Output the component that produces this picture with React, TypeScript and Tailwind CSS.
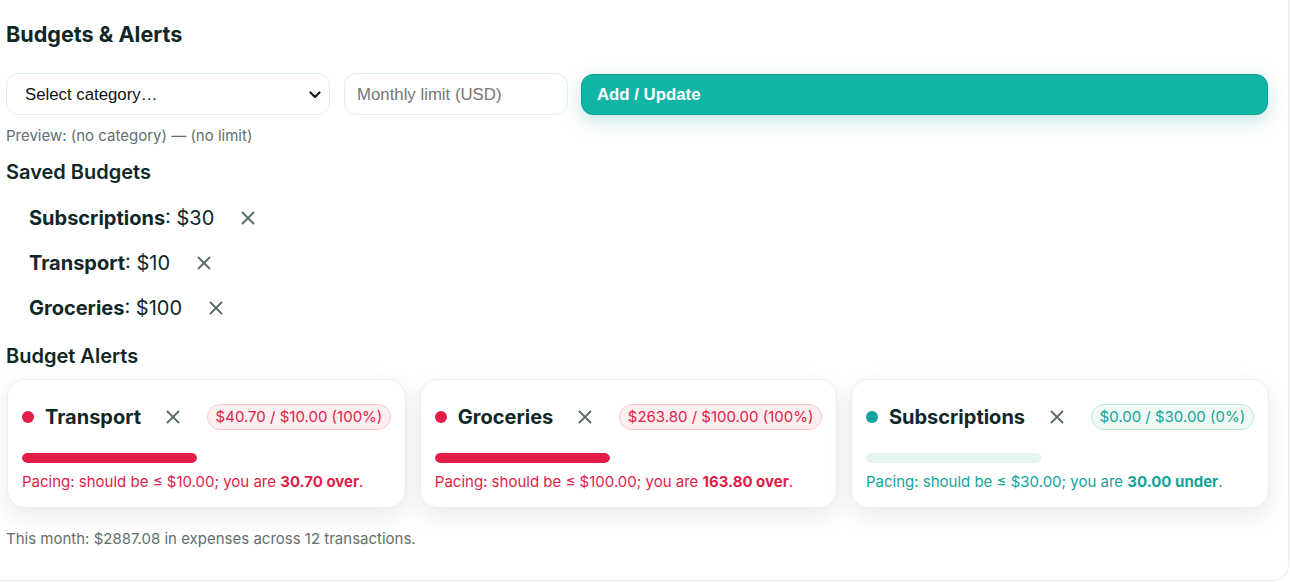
import React from "react";

type Alert = {
  name: string;
  spent: string;
  limit: string;
  pct: string;
  should: string;
  diff: string;
  over: boolean;
};

const alerts: Alert[] = [
  { name: "Transport", spent: "$40.70", limit: "$10.00", pct: "100%", should: "$10.00", diff: "30.70 over", over: true },
  { name: "Groceries", spent: "$263.80", limit: "$100.00", pct: "100%", should: "$100.00", diff: "163.80 over", over: true },
  { name: "Subscriptions", spent: "$0.00", limit: "$30.00", pct: "0%", should: "$30.00", diff: "30.00 under", over: false },
];

const saved = [
  { name: "Subscriptions", amount: "$30" },
  { name: "Transport", amount: "$10" },
  { name: "Groceries", amount: "$100" },
];

function XIcon() {
  return (
    <svg width="14" height="14" viewBox="0 0 14 14" fill="none" stroke="#5b6b6b" strokeWidth="1.8" strokeLinecap="round">
      <line x1="1.5" y1="1.5" x2="12.5" y2="12.5" />
      <line x1="12.5" y1="1.5" x2="1.5" y2="12.5" />
    </svg>
  );
}

function AlertCard({ a }: { a: Alert }) {
  const tone = a.over ? "text-[#e11d48]" : "text-[#14a39a]";
  return (
    <div className="rounded-[18px] border border-[#e2f3ef] bg-white px-[14px] pt-[23px] pb-[15px] shadow-[0_8px_24px_rgba(0,0,0,0.09)]">
      <div className="flex h-[28px] items-center">
        <span className={`h-[12px] w-[12px] rounded-full ${a.over ? "bg-[#e11d48]" : "bg-[#13a39a]"}`} />
        <span className="ml-[11px] text-[20px] font-bold text-[#0f2727]">{a.name}</span>
        <button className="ml-[25px] flex h-[14px] w-[14px] items-center justify-center">
          <XIcon />
        </button>
        <span
          className={`ml-[27px] flex h-[26px] items-center rounded-full border px-[7.5px] text-[15px] ${
            a.over ? "border-[#fbc8d1] bg-[#fdeef0] text-[#e11d48]" : "border-[#bfe9d3] bg-[#eefaf3] text-[#14a39a]"
          }`}
        >
          {a.spent} / {a.limit} ({a.pct})
        </span>
      </div>
      <div className="mt-[22px] h-[10px] w-[175px] overflow-hidden rounded-full bg-[#e3f4f1]">
        <div className={`h-full rounded-full ${a.over ? "bg-[#e11d48]" : ""}`} style={{ width: a.over ? "100%" : "0%" }} />
      </div>
      <div className={`mt-[9px] text-[15px] leading-[20px] ${tone}`}>
        Pacing: should be ≤ {a.should}; you are <b className="font-bold">{a.diff}</b>.
      </div>
    </div>
  );
}

export default function App() {
  return (
    <div className="h-[582px] w-[1290px] overflow-hidden bg-white font-['Inter',sans-serif] text-[#0f2727]">
      <div className="h-[581px] w-[1289px] rounded-br-[16px] border-r border-b border-[#e3efec] pl-[6px]">
        <h2 className="pt-[20px] text-[21.6px] font-bold leading-[28px]">Budgets &amp; Alerts</h2>

        <div className="mt-[25px] flex h-[42px] gap-[13px] pr-[20px] font-['Liberation_Sans',Arial,sans-serif]">
          <div className="relative w-[324px]">
            <select className="h-full w-full appearance-none rounded-[12px] border border-[#dff0ec] bg-white pt-[2px] pl-[18px] text-[16.8px] text-[#111] outline-none">
              <option>Select category…</option>
            </select>
            <svg className="pointer-events-none absolute right-[9px] top-[18px]" width="12" height="8" viewBox="0 0 12 8" fill="none" stroke="#1a1a1a" strokeWidth="2.2" strokeLinecap="round" strokeLinejoin="round">
              <polyline points="1.5,1.5 6,6 10.5,1.5" />
            </svg>
          </div>
          <input
            placeholder="Monthly limit (USD)"
            className="ml-[1px] w-[224px] rounded-[12px] border border-[#dff0ec] bg-white px-[12px] pt-[2px] text-[16.8px] outline-none placeholder:text-[#767676]"
          />
          <button className="mt-[1px] flex-1 rounded-[12px] border border-[#0f9f91] bg-[#12b5a5] pl-[15px] pt-[1px] text-left text-[16.8px] font-bold text-white shadow-[0_6px_18px_rgba(18,150,140,0.25)]">
            Add / Update
          </button>
        </div>

        <p className="mt-[11px] text-[15px] leading-[20px] text-[#5f6f6f]">Preview: (no category) — (no limit)</p>

        <h3 className="mt-[13px] text-[20px] font-semibold leading-[26px]">Saved Budgets</h3>
        <ul className="mt-[10px] pl-[23px]">
          {saved.map((s) => (
            <li key={s.name} className="flex h-[45px] items-center text-[20px]">
              <span>
                <b className="font-bold">{s.name}</b>: {s.amount}
              </span>
              <button className="ml-[27px] flex items-center">
                <XIcon />
              </button>
            </li>
          ))}
        </ul>

        <h3 className="mt-[13px] text-[20px] font-semibold leading-[26px]">Budget Alerts</h3>
        <div className="mt-[10px] flex gap-[14px] pl-[1px]">
          {alerts.map((a) => (
            <AlertCard key={a.name} a={a} />
          ))}
        </div>

        <p className="mt-[21px] text-[15px] leading-[20px] text-[#5f6f6f]">This month: $2887.08 in expenses across 12 transactions.</p>
      </div>
    </div>
  );
}
